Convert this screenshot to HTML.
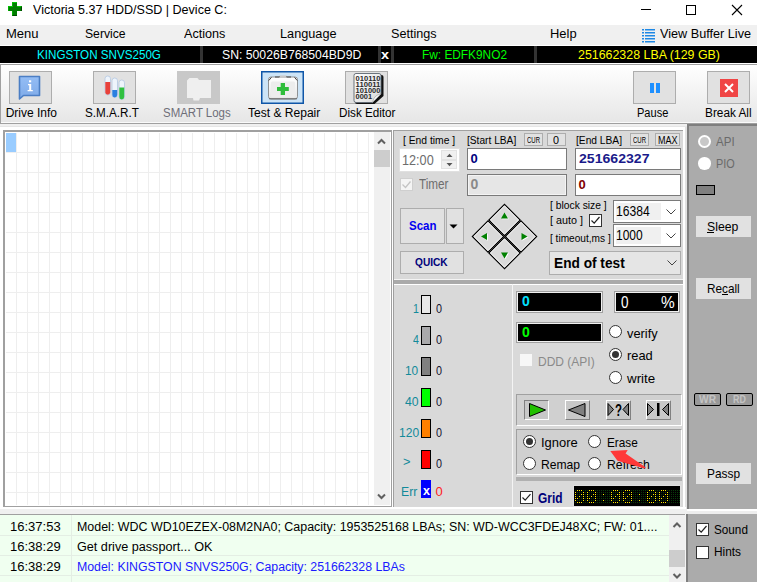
<!DOCTYPE html><html><head><meta charset="utf-8"><style>*{margin:0;padding:0;box-sizing:border-box}
html,body{width:757px;height:582px;overflow:hidden;background:#f0f0f0;position:relative;font-family:"Liberation Sans",sans-serif}
.a{position:absolute}
.t{position:absolute;white-space:pre;line-height:1;transform-origin:0 0}
svg{position:absolute;overflow:visible}
</style></head><body><div class="a" style="left:0px;top:0px;width:757px;height:25px;background:#fff"></div>
<div class="a" style="left:12px;top:2px;width:5px;height:14px;background:#007c00;border-top:1px solid #00c800;border-left:1px solid #00b000;border-bottom:1px solid #004800"></div>
<div class="a" style="left:8px;top:6px;width:14px;height:5px;background:#007c00;border-top:1px solid #00c800;border-left:1px solid #00b000;border-right:1px solid #004800"></div>
<div class="a" style="left:13px;top:6px;width:4px;height:5px;background:#007c00"></div>
<div class="t" style="left:32.50px;top:4.00px;font-size:12px;color:#000;transform:scaleX(1.0446);">Victoria 5.37 HDD/SSD | Device C:</div>
<div class="a" style="left:641px;top:9px;width:10px;height:1px;background:#000"></div>
<div class="a" style="left:686px;top:5px;width:10px;height:10px;border:1px solid #000"></div>
<svg style="left:732px;top:5px" width="10" height="10"><path d="M0 0L10 10M10 0L0 10" stroke="#000" stroke-width="1.1"/></svg>
<div class="a" style="left:0px;top:25px;width:757px;height:20px;background:#f0f0f0"></div>
<div class="t" style="left:6.30px;top:28.00px;font-size:12px;color:#000;transform:scaleX(1.0862);">Menu</div>
<div class="t" style="left:85.40px;top:28.00px;font-size:12px;color:#000;transform:scaleX(1.0145);">Service</div>
<div class="t" style="left:183.90px;top:28.00px;font-size:12px;color:#000;transform:scaleX(1.0522);">Actions</div>
<div class="t" style="left:280.20px;top:28.00px;font-size:12px;color:#000;transform:scaleX(1.0583);">Language</div>
<div class="t" style="left:390.90px;top:28.00px;font-size:12px;color:#000;transform:scaleX(1.0518);">Settings</div>
<div class="t" style="left:550.20px;top:28.00px;font-size:12px;color:#000;transform:scaleX(1.0776);">Help</div>
<svg style="left:642px;top:29px" width="14" height="14"><rect x="0" y="0" width="2" height="1.5" fill="#1e88e5"/><rect x="3" y="0" width="10" height="1.5" fill="#1e88e5"/><rect x="0" y="3" width="2" height="1.5" fill="#1e88e5"/><rect x="3" y="3" width="10" height="1.5" fill="#1e88e5"/><rect x="0" y="6" width="2" height="1.5" fill="#1e88e5"/><rect x="3" y="6" width="10" height="1.5" fill="#1e88e5"/><rect x="0" y="9" width="2" height="1.5" fill="#1e88e5"/><rect x="3" y="9" width="10" height="1.5" fill="#1e88e5"/><rect x="0" y="12" width="2" height="1.5" fill="#1e88e5"/><rect x="3" y="12" width="10" height="1.5" fill="#1e88e5"/></svg>
<div class="t" style="left:660.20px;top:28.00px;font-size:12px;color:#000;transform:scaleX(1.0547);">View Buffer Live</div>
<div class="a" style="left:0px;top:45px;width:757px;height:1px;background:#fff"></div>
<div class="a" style="left:0px;top:46px;width:757px;height:17px;background:#000"></div>
<div class="a" style="left:200px;top:46px;width:3px;height:17px;background:#333"></div>
<div class="a" style="left:378px;top:46px;width:3px;height:17px;background:#333"></div>
<div class="a" style="left:391px;top:46px;width:3px;height:17px;background:#333"></div>
<div class="a" style="left:534px;top:46px;width:3px;height:17px;background:#333"></div>
<div class="t" style="left:37.40px;top:49.00px;font-size:12px;color:#00ffff;transform:scaleX(0.9693);">KINGSTON SNVS250G</div>
<div class="t" style="left:221.50px;top:49.00px;font-size:12px;color:#fff;transform:scaleX(1.0185);">SN: 50026B768504BD9D</div>
<div class="t" style="left:381.40px;top:48.00px;font-size:13px;color:#fff;font-weight:700;transform:scaleX(1.1068);">x</div>
<div class="t" style="left:421.50px;top:49.00px;font-size:12px;color:#00ff00;transform:scaleX(0.9882);">Fw: EDFK9NO2</div>
<div class="t" style="left:577.50px;top:49.00px;font-size:12px;color:#ffff00;transform:scaleX(1.0332);">251662328 LBA (129 GB)</div>
<div class="a" style="left:0px;top:63px;width:757px;height:1px;background:#fff"></div>
<div class="a" style="left:0px;top:64px;width:757px;height:60px;background:linear-gradient(#ffffff,#e6e6e6);border-top:1px solid #a0a0a0;border-bottom:1px solid #a0a0a0"></div>
<div class="a" style="left:0px;top:64px;width:1px;height:59px;background:#a0a0a0"></div>
<div class="a" style="left:9px;top:71px;width:43px;height:33px;background:#e1e1e1;border:1px solid #adadad"></div>
<div class="a" style="left:93px;top:71px;width:43px;height:33px;background:#e1e1e1;border:1px solid #adadad"></div>
<div class="a" style="left:177px;top:71px;width:43px;height:33px;background:#c8c8c8"></div>
<div class="a" style="left:261px;top:71px;width:43px;height:33px;background:#cce4f7;border:1px solid #0f56a8;box-shadow:inset 0 0 0 0.5px #0f56a8"></div>
<div class="a" style="left:345px;top:71px;width:43px;height:33px;background:#e1e1e1;border:1px solid #adadad"></div>
<div class="a" style="left:633px;top:71px;width:43px;height:33px;background:#e1e1e1;border:1px solid #adadad"></div>
<div class="a" style="left:707px;top:71px;width:43px;height:33px;background:#e1e1e1;border:1px solid #adadad"></div>
<svg style="left:0;top:0" width="757" height="582"><defs><linearGradient id="gb" x1="0" y1="0" x2="0" y2="1"><stop offset="0" stop-color="#94bdf5"/><stop offset="1" stop-color="#7eaae8"/></linearGradient><linearGradient id="kit" x1="0" y1="0" x2="0" y2="1"><stop offset="0" stop-color="#ffffff"/><stop offset="1" stop-color="#e6e6e6"/></linearGradient><linearGradient id="doc" x1="0" y1="0" x2="1" y2="1"><stop offset="0" stop-color="#ffffff"/><stop offset="1" stop-color="#d8d8d8"/></linearGradient></defs><path d="M19.5 76.5H39.5V95.5H23.5L19.5 99Z" fill="url(#gb)" stroke="#4b7ec4" stroke-width="1.6" stroke-linejoin="round"/><rect x="29" y="80.3" width="2.2" height="2" fill="#fff"/><path d="M28 84H31.2V90H32.8V91.3H27.6V90H29.2V85.3H28Z" fill="#fff"/><rect x="105" y="76" width="5.5" height="19" rx="2.7" fill="#eef4fb" stroke="#b4c8e2" stroke-width="0.8"/><path d="M105.3 82H110.2V92.3A2.45 2.45 0 0 1 105.3 92.3Z" fill="#e8413a"/><rect x="112" y="78" width="5.5" height="19.5" rx="2.7" fill="#eef4fb" stroke="#b4c8e2" stroke-width="0.8"/><path d="M112.3 90H117.2V95A2.45 2.45 0 0 1 112.3 95Z" fill="#2a7fe0"/><rect x="119" y="80" width="5.5" height="19.5" rx="2.7" fill="#eef4fb" stroke="#b4c8e2" stroke-width="0.8"/><path d="M119.3 87.5H124.2V97A2.45 2.45 0 0 1 119.3 97Z" fill="#30c040"/><path d="M187 80.5L189.5 78H197.5L199 80H211V98H200L199 100.5H193.5L193 98H187Z" fill="#efefef"/><rect x="268.5" y="77" width="29" height="22" rx="2.5" fill="url(#kit)" stroke="#7a7a7a" stroke-width="0.8"/><rect x="271" y="81.5" width="24" height="15.5" rx="1.5" fill="#ededed"/><path d="M268.8 80.5L271.5 77.3M297.2 80.5L294.5 77.3" stroke="#444" stroke-width="1"/><path d="M275 77H279.5V76M286.5 76V77H291" fill="none" stroke="#444" stroke-width="1"/><rect x="279.5" y="75.5" width="7" height="2" fill="#c8c8c8"/><path d="M269 98.8H297" stroke="#666" stroke-width="1"/><rect x="280.7" y="83" width="4.3" height="12" fill="#2fbd3b"/><rect x="277" y="87" width="11.8" height="4" fill="#2fbd3b"/><path d="M357 75H381.5A2 2 0 0 1 383.5 77V96L374.5 104H357A2 2 0 0 1 355 102V77A2 2 0 0 1 357 75Z" fill="#111"/><path d="M356 73.5H379A2 2 0 0 1 381 75.5V94L372.5 102.5H356A2 2 0 0 1 354 100.5V75.5A2 2 0 0 1 356 73.5Z" fill="url(#doc)" stroke="#5d6670" stroke-width="0.9"/><path d="M381 94L372.5 102.5C373.5 98.5 375 95 381 94Z" fill="#f4f4f4" stroke="#8a8a8a" stroke-width="0.5"/><text x="355.6" y="80.8" font-family="Liberation Sans" font-weight="700" font-size="7.4" fill="#2a2a2a" textLength="24.8" lengthAdjust="spacingAndGlyphs">010110</text><text x="355.6" y="87" font-family="Liberation Sans" font-weight="700" font-size="7.4" fill="#2a2a2a" textLength="24.8" lengthAdjust="spacingAndGlyphs">110011</text><text x="355.6" y="93.2" font-family="Liberation Sans" font-weight="700" font-size="7.4" fill="#2a2a2a" textLength="24.8" lengthAdjust="spacingAndGlyphs">101000</text><text x="355.6" y="99.4" font-family="Liberation Sans" font-weight="700" font-size="7.4" fill="#2a2a2a" textLength="16.5" lengthAdjust="spacingAndGlyphs">0001</text></svg>
<div class="t" style="left:5.70px;top:107.00px;font-size:12px;color:#000;">Drive Info</div>
<div class="t" style="left:85.40px;top:107.00px;font-size:12px;color:#000;transform:scaleX(0.9723);">S.M.A.R.T</div>
<div class="t" style="left:163.20px;top:107.00px;font-size:12px;color:#6e6e78;transform:scaleX(0.9546);">SMART Logs</div>
<div class="t" style="left:248.00px;top:107.00px;font-size:12px;color:#000;transform:scaleX(1.0038);">Test & Repair</div>
<div class="t" style="left:339.00px;top:107.00px;font-size:12px;color:#000;transform:scaleX(0.9738);">Disk Editor</div>
<div class="t" style="left:637.20px;top:107.00px;font-size:12px;color:#000;transform:scaleX(0.9200);">Pause</div>
<div class="t" style="left:705.00px;top:107.00px;font-size:12px;color:#000;transform:scaleX(0.9841);">Break All</div>
<div class="a" style="left:650px;top:83px;width:4px;height:10px;background:#1e90ff"></div>
<div class="a" style="left:656px;top:83px;width:4px;height:10px;background:#1e90ff"></div>
<div class="a" style="left:720px;top:79px;width:18px;height:18px;background:#f04545"></div>
<svg style="left:724px;top:83px" width="10" height="10"><path d="M1 1L9 9M9 1L1 9" stroke="#fff" stroke-width="2"/></svg>
<div class="a" style="left:0px;top:124px;width:687px;height:390px;background:#f0f0f0"></div>
<div class="a" style="left:0px;top:127px;width:687px;height:382px;background:#fff"></div>
<div class="a" style="left:0px;top:126px;width:687px;height:1px;background:#e6e6e6"></div>
<div class="a" style="left:1px;top:122px;width:756px;height:1px;background:#fafafa"></div>
<div class="a" style="left:3px;top:130px;width:389px;height:377px;background:#fff;border-left:2px solid #a0a0a0;border-top:2px solid #a0a0a0;border-bottom:1px solid #a0a0a0;border-right:1px solid #a0a0a0"></div>
<svg style="left:0;top:0" width="757" height="582"><rect x="16" y="133" width="1" height="372" fill="#eeeeee"/><rect x="27" y="133" width="1" height="372" fill="#eeeeee"/><rect x="38" y="133" width="1" height="372" fill="#eeeeee"/><rect x="49" y="133" width="1" height="372" fill="#eeeeee"/><rect x="60" y="133" width="1" height="372" fill="#eeeeee"/><rect x="71" y="133" width="1" height="372" fill="#eeeeee"/><rect x="82" y="133" width="1" height="372" fill="#eeeeee"/><rect x="93" y="133" width="1" height="372" fill="#eeeeee"/><rect x="104" y="133" width="1" height="372" fill="#eeeeee"/><rect x="115" y="133" width="1" height="372" fill="#eeeeee"/><rect x="126" y="133" width="1" height="372" fill="#eeeeee"/><rect x="137" y="133" width="1" height="372" fill="#eeeeee"/><rect x="148" y="133" width="1" height="372" fill="#eeeeee"/><rect x="159" y="133" width="1" height="372" fill="#eeeeee"/><rect x="170" y="133" width="1" height="372" fill="#eeeeee"/><rect x="181" y="133" width="1" height="372" fill="#eeeeee"/><rect x="192" y="133" width="1" height="372" fill="#eeeeee"/><rect x="203" y="133" width="1" height="372" fill="#eeeeee"/><rect x="214" y="133" width="1" height="372" fill="#eeeeee"/><rect x="225" y="133" width="1" height="372" fill="#eeeeee"/><rect x="236" y="133" width="1" height="372" fill="#eeeeee"/><rect x="247" y="133" width="1" height="372" fill="#eeeeee"/><rect x="258" y="133" width="1" height="372" fill="#eeeeee"/><rect x="269" y="133" width="1" height="372" fill="#eeeeee"/><rect x="280" y="133" width="1" height="372" fill="#eeeeee"/><rect x="291" y="133" width="1" height="372" fill="#eeeeee"/><rect x="302" y="133" width="1" height="372" fill="#eeeeee"/><rect x="313" y="133" width="1" height="372" fill="#eeeeee"/><rect x="324" y="133" width="1" height="372" fill="#eeeeee"/><rect x="335" y="133" width="1" height="372" fill="#eeeeee"/><rect x="346" y="133" width="1" height="372" fill="#eeeeee"/><rect x="357" y="133" width="1" height="372" fill="#eeeeee"/><rect x="368" y="133" width="1" height="372" fill="#eeeeee"/><rect x="6" y="152" width="363" height="1" fill="#eeeeee"/><rect x="6" y="172" width="363" height="1" fill="#eeeeee"/><rect x="6" y="192" width="363" height="1" fill="#eeeeee"/><rect x="6" y="212" width="363" height="1" fill="#eeeeee"/><rect x="6" y="232" width="363" height="1" fill="#eeeeee"/><rect x="6" y="252" width="363" height="1" fill="#eeeeee"/><rect x="6" y="272" width="363" height="1" fill="#eeeeee"/><rect x="6" y="292" width="363" height="1" fill="#eeeeee"/><rect x="6" y="312" width="363" height="1" fill="#eeeeee"/><rect x="6" y="332" width="363" height="1" fill="#eeeeee"/><rect x="6" y="352" width="363" height="1" fill="#eeeeee"/><rect x="6" y="372" width="363" height="1" fill="#eeeeee"/><rect x="6" y="392" width="363" height="1" fill="#eeeeee"/><rect x="6" y="412" width="363" height="1" fill="#eeeeee"/><rect x="6" y="432" width="363" height="1" fill="#eeeeee"/><rect x="6" y="452" width="363" height="1" fill="#eeeeee"/><rect x="6" y="472" width="363" height="1" fill="#eeeeee"/><rect x="6" y="492" width="363" height="1" fill="#eeeeee"/></svg>
<div class="a" style="left:6px;top:133px;width:10px;height:19px;background:#99ccff"></div>
<div class="a" style="left:374px;top:132px;width:16px;height:373px;background:#f0f0f0"></div>
<div class="a" style="left:374px;top:150px;width:16px;height:17px;background:#cdcdcd"></div>
<svg style="left:374px;top:132px" width="16" height="373"><path d="M4 11.5L7.5 8L11 11.5" fill="none" stroke="#606060" stroke-width="2"/><path d="M4 362.5L7.5 366L11 362.5" fill="none" stroke="#606060" stroke-width="2"/></svg>
<div class="a" style="left:393px;top:130px;width:290px;height:377px;background:#d9d9d9;border-left:1px solid #a0a0a0;border-top:1px solid #a0a0a0"></div>
<div class="a" style="left:683px;top:127px;width:2px;height:380px;background:#fff"></div>
<div class="a" style="left:685px;top:127px;width:2px;height:382px;background:#e2e2e2"></div>
<div class="a" style="left:393px;top:507px;width:293px;height:2px;background:#fff"></div>
<div class="t" style="left:402.50px;top:136.00px;font-size:10px;color:#000;transform:scaleX(1.0320);">[ End time ]</div>
<div class="t" style="left:467.10px;top:136.00px;font-size:10px;color:#000;transform:scaleX(1.0176);">[Start LBA]</div>
<div class="t" style="left:575.50px;top:136.00px;font-size:10px;color:#000;transform:scaleX(1.0215);">[End LBA]</div>
<div class="a" style="left:524px;top:133px;width:19px;height:13px;background:#e1e1e1;border:1px solid #adadad"></div>
<div class="t" style="left:527.00px;top:136.00px;font-size:9px;color:#000;transform:scaleX(0.6666);">CUR</div>
<div class="a" style="left:547px;top:133px;width:19px;height:13px;background:#e1e1e1;border:1px solid #adadad"></div>
<div class="t" style="left:553.00px;top:136.00px;font-size:10px;color:#000;transform:scaleX(1.0791);">0</div>
<div class="a" style="left:630px;top:133px;width:19px;height:13px;background:#e1e1e1;border:1px solid #adadad"></div>
<div class="t" style="left:633.00px;top:136.00px;font-size:9px;color:#000;transform:scaleX(0.6666);">CUR</div>
<div class="a" style="left:655px;top:133px;width:25px;height:13px;background:#e1e1e1;border:1px solid #adadad"></div>
<div class="t" style="left:657.50px;top:136.00px;font-size:10px;color:#000;transform:scaleX(0.8999);">MAX</div>
<div class="a" style="left:399px;top:148px;width:61px;height:24px;background:#fff;border:1px solid #e0e0e0"></div>
<div class="t" style="left:401.90px;top:153.00px;font-size:14px;color:#6d6d6d;transform:scaleX(0.9050);">12:00</div>
<div class="a" style="left:441px;top:150px;width:16px;height:10px;background:#f0f0f0;border:1px solid #e2e2e2"></div>
<div class="a" style="left:441px;top:160px;width:16px;height:9px;background:#f0f0f0;border:1px solid #e2e2e2"></div>
<svg style="left:0;top:0" width="757" height="582"><path d="M446.5 157L449.5 153.8L452.5 157Z" fill="#555"/><path d="M446.5 163L449.5 166.2L452.5 163Z" fill="#555"/></svg>
<div class="a" style="left:467px;top:148px;width:100px;height:22px;background:#fff;border:1px solid #7a7a7a"></div>
<div class="t" style="left:470.50px;top:152.00px;font-size:13px;color:#000080;font-weight:700;">0</div>
<div class="a" style="left:575px;top:148px;width:106px;height:22px;background:#fff;border:1px solid #7a7a7a"></div>
<div class="t" style="left:578.70px;top:152.00px;font-size:13px;color:#1a1a8a;font-weight:700;transform:scaleX(1.0835);">251662327</div>
<div class="a" style="left:467px;top:174px;width:100px;height:22px;background:#e6e6e6;border:1px solid #7a7a7a;box-shadow:inset 0 0 0 1px #f4f4f4"></div>
<div class="t" style="left:470.50px;top:177.00px;font-size:14px;color:#8a8a8a;font-weight:700;">0</div>
<div class="a" style="left:575px;top:174px;width:106px;height:22px;background:#fff;border:1px solid #7a7a7a"></div>
<div class="t" style="left:578.50px;top:178.00px;font-size:13px;color:#800000;font-weight:700;">0</div>
<div class="a" style="left:400px;top:178px;width:13px;height:13px;background:#f4f4f4;border:1px solid #cfcfcf"></div>
<svg style="left:400px;top:178px" width="13" height="13"><path d="M2.5 6.5L5.5 9.5L10.5 3.5" fill="none" stroke="#c4c4c4" stroke-width="1.3"/></svg>
<div class="t" style="left:419.30px;top:177.00px;font-size:14px;color:#6d6d6d;transform:scaleX(0.8368);">Timer</div>
<div class="a" style="left:400px;top:208px;width:45px;height:36px;background:#e1e1e1;border:1px solid #adadad"></div>
<div class="t" style="left:409.00px;top:219.00px;font-size:13px;color:#0000f0;font-weight:700;transform:scaleX(0.8851);">Scan</div>
<div class="a" style="left:446px;top:208px;width:18px;height:36px;background:#e1e1e1;border:1px solid #adadad"></div>
<svg style="left:449px;top:224px" width="10" height="6"><path d="M0.5 0.5L8.5 0.5L4.5 4.5Z" fill="#000"/></svg>
<div class="a" style="left:400px;top:251px;width:64px;height:23px;background:#e1e1e1;border:1px solid #adadad"></div>
<div class="t" style="left:415.40px;top:257.00px;font-size:11px;color:#00007a;font-weight:700;transform:scaleX(0.9226);">QUICK</div>
<svg style="left:0;top:0" width="757" height="582"><polygon points="504.5,204.4 520.1,220.0 504.5,235.6 488.9,220.0" fill="#dadada" stroke="#000" stroke-width="1.25"/><polygon points="504.5,205.9 518.6,220.0 504.5,234.1 490.4,220.0" fill="none" stroke="#f4f4f4" stroke-width="1"/><polygon points="488.0,220.9 503.6,236.5 488.0,252.1 472.4,236.5" fill="#dadada" stroke="#000" stroke-width="1.25"/><polygon points="488.0,222.4 502.1,236.5 488.0,250.6 473.9,236.5" fill="none" stroke="#f4f4f4" stroke-width="1"/><polygon points="521.0,220.9 536.6,236.5 521.0,252.1 505.4,236.5" fill="#dadada" stroke="#000" stroke-width="1.25"/><polygon points="521.0,222.4 535.1,236.5 521.0,250.6 506.9,236.5" fill="none" stroke="#f4f4f4" stroke-width="1"/><polygon points="504.5,237.4 520.1,253.0 504.5,268.6 488.9,253.0" fill="#dadada" stroke="#000" stroke-width="1.25"/><polygon points="504.5,238.9 518.6,253.0 504.5,267.1 490.4,253.0" fill="none" stroke="#f4f4f4" stroke-width="1"/><path d="M504.5 212.5L501 218.5L508 218.5Z" fill="#fff" transform="translate(0.8,0.8)"/><path d="M504.5 258.5L501 252.5L508 252.5Z" fill="#fff" transform="translate(0.8,0.8)"/><path d="M481 236.5L487 233L487 240Z" fill="#fff" transform="translate(0.8,0.8)"/><path d="M527.5 236.5L521.5 233L521.5 240Z" fill="#fff" transform="translate(0.8,0.8)"/><path d="M504.5 212.5L501 218.5L508 218.5Z" fill="#008000"/><path d="M504.5 258.5L501 252.5L508 252.5Z" fill="#008000"/><path d="M481 236.5L487 233L487 240Z" fill="#008000"/><path d="M527.5 236.5L521.5 233L521.5 240Z" fill="#008000"/></svg>
<div class="t" style="left:550.30px;top:200.00px;font-size:11px;color:#000;transform:scaleX(0.9368);">[ block size ]</div>
<div class="t" style="left:550.30px;top:215.00px;font-size:11px;color:#000;transform:scaleX(0.9781);">[ auto ]</div>
<div class="a" style="left:589px;top:214px;width:13px;height:13px;background:#fff;border:1px solid #333"></div>
<svg style="left:589px;top:214px" width="13" height="13"><path d="M2.5 6.5L5.2 9.2L10.5 3" fill="none" stroke="#222" stroke-width="1.2"/></svg>
<div class="t" style="left:550.30px;top:233.00px;font-size:11px;color:#000;transform:scaleX(0.9195);">[ timeout,ms ]</div>
<div class="a" style="left:613px;top:200px;width:68px;height:23px;background:#fff;border:1px solid #7a7a7a"></div>
<div class="a" style="left:616px;top:203px;width:45px;height:17px;background:#f0f0f0"></div>
<div class="t" style="left:616.30px;top:204.00px;font-size:14px;color:#000;transform:scaleX(0.8656);">16384</div>
<svg style="left:666px;top:209px" width="10" height="6"><path d="M0.5 0.5L5 5L9.5 0.5" fill="none" stroke="#444" stroke-width="1"/></svg>
<div class="a" style="left:613px;top:224px;width:68px;height:23px;background:#fff;border:1px solid #7a7a7a"></div>
<div class="a" style="left:616px;top:227px;width:45px;height:17px;background:#f0f0f0"></div>
<div class="t" style="left:616.30px;top:228.00px;font-size:14px;color:#000;transform:scaleX(0.8571);">1000</div>
<svg style="left:666px;top:233px" width="10" height="6"><path d="M0.5 0.5L5 5L9.5 0.5" fill="none" stroke="#444" stroke-width="1"/></svg>
<div class="a" style="left:549px;top:251px;width:132px;height:24px;background:#e5e5e5;border:1px solid #adadad"></div>
<div class="t" style="left:553.50px;top:255.00px;font-size:15px;color:#000;font-weight:700;transform:scaleX(0.9122);">End of test</div>
<svg style="left:667px;top:260px" width="10" height="6"><path d="M0.5 0.5L5 5L9.5 0.5" fill="none" stroke="#444" stroke-width="1"/></svg>
<div class="a" style="left:394px;top:279px;width:289px;height:1px;background:#f4f4f4"></div>
<div class="a" style="left:394px;top:280px;width:289px;height:4px;background:#aaaaaa"></div>
<div class="a" style="left:394px;top:284px;width:289px;height:1px;background:#fff"></div>
<div class="a" style="left:512px;top:284px;width:1px;height:223px;background:#f4f4f4"></div>
<div class="a" style="left:421px;top:295px;width:10px;height:19px;background:#e8e8e8;border:1px solid #000"></div>
<div class="t" style="left:412.70px;top:302.00px;font-size:13px;color:#128a9a;transform:scaleX(0.8163);">1</div>
<div class="t" style="left:435.50px;top:302.00px;font-size:13px;color:#14102e;transform:scaleX(0.8301);">0</div>
<div class="a" style="left:421px;top:326px;width:10px;height:19px;background:#a9a9ab;border:1px solid #000"></div>
<div class="t" style="left:412.70px;top:333.00px;font-size:13px;color:#128a9a;transform:scaleX(0.8163);">4</div>
<div class="t" style="left:435.50px;top:333.00px;font-size:13px;color:#14102e;transform:scaleX(0.8301);">0</div>
<div class="a" style="left:421px;top:357px;width:10px;height:19px;background:#808080;border:1px solid #000"></div>
<div class="t" style="left:405.40px;top:364.00px;font-size:13px;color:#128a9a;transform:scaleX(0.9131);">10</div>
<div class="t" style="left:435.50px;top:364.00px;font-size:13px;color:#14102e;transform:scaleX(0.8301);">0</div>
<div class="a" style="left:421px;top:388px;width:10px;height:19px;background:#00ff00;border:1px solid #000"></div>
<div class="t" style="left:405.00px;top:395.00px;font-size:13px;color:#128a9a;transform:scaleX(0.9408);">40</div>
<div class="t" style="left:435.50px;top:395.00px;font-size:13px;color:#14102e;transform:scaleX(0.8301);">0</div>
<div class="a" style="left:421px;top:419px;width:10px;height:19px;background:#ff8000;border:1px solid #000"></div>
<div class="t" style="left:398.50px;top:426.00px;font-size:13px;color:#128a9a;transform:scaleX(0.9270);">120</div>
<div class="t" style="left:435.50px;top:426.00px;font-size:13px;color:#14102e;transform:scaleX(0.8301);">0</div>
<div class="a" style="left:421px;top:450px;width:10px;height:19px;background:#ff0000;border:1px solid #000"></div>
<div class="t" style="left:403.00px;top:455.00px;font-size:13px;color:#128a9a;transform:scaleX(0.9879);">></div>
<div class="t" style="left:435.50px;top:457.00px;font-size:13px;color:#14102e;transform:scaleX(0.8301);">0</div>
<div class="a" style="left:421px;top:480px;width:10px;height:18px;background:#0000ff"></div>
<div class="t" style="left:422.50px;top:484.00px;font-size:13px;color:#fff;font-weight:700;transform:scaleX(0.9685);">x</div>
<div class="t" style="left:400.50px;top:485.00px;font-size:13px;color:#128a9a;transform:scaleX(0.9406);">Err</div>
<div class="t" style="left:435.50px;top:485.00px;font-size:13px;color:#ff2020;">0</div>
<div class="a" style="left:516px;top:291px;width:87px;height:22px;background:#000;border:1px solid #a0a0a0;box-shadow:inset 0 0 0 1px #f0f0f0"></div>
<div class="t" style="left:522.00px;top:294.00px;font-size:14px;color:#00e0ff;font-weight:700;">0</div>
<div class="a" style="left:614px;top:291px;width:66px;height:22px;background:#000;border:1px solid #a0a0a0;box-shadow:inset 0 0 0 1px #f0f0f0"></div>
<div class="t" style="left:621.00px;top:294.00px;font-size:17px;color:#fff;transform:scaleX(0.7935);">0</div>
<div class="t" style="left:660.70px;top:294.00px;font-size:17px;color:#fff;transform:scaleX(0.9065);">%</div>
<div class="a" style="left:516px;top:322px;width:87px;height:21px;background:#000;border:1px solid #a0a0a0;box-shadow:inset 0 0 0 1px #f0f0f0"></div>
<div class="t" style="left:522.00px;top:325.00px;font-size:14px;color:#00ff00;font-weight:700;">0</div>
<div class="a" style="left:609px;top:325px;width:13px;height:13px;border:1px solid #333;background:#fff;border-radius:50%"></div>
<div class="t" style="left:627.20px;top:327.00px;font-size:13px;color:#000;transform:scaleX(0.9853);">verify</div>
<div class="a" style="left:609px;top:348px;width:13px;height:13px;border:1px solid #333;background:#fff;border-radius:50%"></div>
<div class="a" style="left:612px;top:351px;width:7px;height:7px;background:#333;border-radius:50%"></div>
<div class="t" style="left:627.20px;top:349.00px;font-size:13px;color:#000;transform:scaleX(0.9880);">read</div>
<div class="a" style="left:609px;top:371px;width:13px;height:13px;border:1px solid #333;background:#fff;border-radius:50%"></div>
<div class="t" style="left:627.23px;top:372.00px;font-size:13px;color:#000;transform:scaleX(1.0266);">write</div>
<div class="a" style="left:520px;top:354px;width:12px;height:12px;background:#f7f7f7"></div>
<div class="t" style="left:537.50px;top:355.00px;font-size:13px;color:#8a8a8a;transform:scaleX(0.9237);">DDD (API)</div>
<div class="a" style="left:516px;top:394px;width:166px;height:32px;background:#d0d0d0;border-top:1px solid #a0a0a0;border-left:1px solid #a0a0a0;border-bottom:1px solid #fff;border-right:1px solid #fff"></div>
<div class="a" style="left:524px;top:400px;width:25px;height:20px;background:#c8c8c8;border-top:1px solid #808080;border-left:1px solid #808080;border-bottom:1px solid #fff;border-right:1px solid #fff"></div>
<div class="a" style="left:565px;top:400px;width:25px;height:20px;background:#c8c8c8;border-top:1px solid #fff;border-left:1px solid #fff;border-bottom:1px solid #808080;border-right:1px solid #808080"></div>
<div class="a" style="left:606px;top:400px;width:25px;height:20px;background:#c8c8c8;border-top:1px solid #fff;border-left:1px solid #fff;border-bottom:1px solid #808080;border-right:1px solid #808080"></div>
<div class="a" style="left:646px;top:400px;width:25px;height:20px;background:#c8c8c8;border-top:1px solid #fff;border-left:1px solid #fff;border-bottom:1px solid #808080;border-right:1px solid #808080"></div>
<svg style="left:0;top:0" width="757" height="582"><path d="M529.5 403.5L545.5 410L529.5 416.5Z" fill="#22c000" stroke="#000" stroke-width="1"/><path d="M585 403.5L568.5 410L585 416.5Z" fill="#808080" stroke="#000" stroke-width="1"/><path d="M608 403.5L613.5 409.5L608 415.5Z" fill="#808080" stroke="#000" stroke-width="1"/><path d="M628.5 403.5L623 409.5L628.5 415.5Z" fill="#808080" stroke="#000" stroke-width="1"/><path d="M647.5 403.5L653.5 409.5L647.5 415.5Z" fill="#808080" stroke="#000" stroke-width="1"/><rect x="657" y="403" width="2.5" height="13" fill="#000"/><path d="M668.5 403.5L662.5 409.5L668.5 415.5Z" fill="#808080" stroke="#000" stroke-width="1"/></svg>
<div class="t" style="left:614.80px;top:402.00px;font-size:17px;color:#000;font-weight:700;transform:scaleX(0.6739);">?</div>
<div class="a" style="left:516px;top:429px;width:166px;height:46px;background:#d0d0d0;border-top:1px solid #a0a0a0;border-left:1px solid #a0a0a0;border-bottom:1px solid #fff;border-right:1px solid #fff"></div>
<div class="a" style="left:523px;top:435px;width:13px;height:13px;border:1px solid #333;background:#fff;border-radius:50%"></div>
<div class="a" style="left:526px;top:438px;width:7px;height:7px;background:#333;border-radius:50%"></div>
<div class="t" style="left:541.20px;top:436.00px;font-size:13px;color:#000;transform:scaleX(0.9958);">Ignore</div>
<div class="a" style="left:588px;top:435px;width:13px;height:13px;border:1px solid #333;background:#fff;border-radius:50%"></div>
<div class="t" style="left:606.50px;top:436.00px;font-size:13px;color:#000;transform:scaleX(0.9071);">Erase</div>
<div class="a" style="left:523px;top:457px;width:13px;height:13px;border:1px solid #333;background:#fff;border-radius:50%"></div>
<div class="t" style="left:541.20px;top:458.00px;font-size:13px;color:#000;transform:scaleX(0.9329);">Remap</div>
<div class="a" style="left:588px;top:457px;width:13px;height:13px;border:1px solid #333;background:#fff;border-radius:50%"></div>
<div class="t" style="left:606.50px;top:458.00px;font-size:13px;color:#000;transform:scaleX(0.9404);">Refresh</div>
<svg style="left:0;top:0" width="757" height="582"><path d="M610.3 451.1L627.7 450.1L625.6 453.6L645.8 467.6L644.5 468.6L617.5 460.8Z" fill="#ff3838"/></svg>
<div class="a" style="left:516px;top:477px;width:166px;height:4px;background:#b0b0b0"></div>
<div class="a" style="left:520px;top:491px;width:13px;height:13px;background:#fff;border:1px solid #333"></div>
<svg style="left:520px;top:491px" width="13" height="13"><path d="M2.5 6.5L5.2 9.2L10.5 3.2" fill="none" stroke="#222" stroke-width="1.2"/></svg>
<div class="t" style="left:538.00px;top:491.00px;font-size:14px;color:#00007a;font-weight:700;transform:scaleX(0.8512);">Grid</div>
<div class="a" style="left:573px;top:485px;width:108px;height:22px;background:#000;border:1px solid #e0e0e0"></div>
<svg style="left:0;top:0" width="757" height="582"><rect x="575" y="490" width="1" height="1" fill="#0a3a0a"/><rect x="575" y="492" width="1" height="1" fill="#ffe800"/><rect x="575" y="494" width="1" height="1" fill="#ffe800"/><rect x="575" y="496" width="1" height="1" fill="#ffe800"/><rect x="575" y="498" width="1" height="1" fill="#ffe800"/><rect x="575" y="500" width="1" height="1" fill="#ffe800"/><rect x="575" y="502" width="1" height="1" fill="#0a3a0a"/><rect x="577" y="490" width="1" height="1" fill="#ffe800"/><rect x="577" y="492" width="1" height="1" fill="#0a3a0a"/><rect x="577" y="494" width="1" height="1" fill="#0a3a0a"/><rect x="577" y="496" width="1" height="1" fill="#0a3a0a"/><rect x="577" y="498" width="1" height="1" fill="#ffe800"/><rect x="577" y="500" width="1" height="1" fill="#0a3a0a"/><rect x="577" y="502" width="1" height="1" fill="#ffe800"/><rect x="579" y="490" width="1" height="1" fill="#ffe800"/><rect x="579" y="492" width="1" height="1" fill="#0a3a0a"/><rect x="579" y="494" width="1" height="1" fill="#0a3a0a"/><rect x="579" y="496" width="1" height="1" fill="#ffe800"/><rect x="579" y="498" width="1" height="1" fill="#0a3a0a"/><rect x="579" y="500" width="1" height="1" fill="#0a3a0a"/><rect x="579" y="502" width="1" height="1" fill="#ffe800"/><rect x="581" y="490" width="1" height="1" fill="#ffe800"/><rect x="581" y="492" width="1" height="1" fill="#0a3a0a"/><rect x="581" y="494" width="1" height="1" fill="#ffe800"/><rect x="581" y="496" width="1" height="1" fill="#0a3a0a"/><rect x="581" y="498" width="1" height="1" fill="#0a3a0a"/><rect x="581" y="500" width="1" height="1" fill="#0a3a0a"/><rect x="581" y="502" width="1" height="1" fill="#ffe800"/><rect x="583" y="490" width="1" height="1" fill="#0a3a0a"/><rect x="583" y="492" width="1" height="1" fill="#ffe800"/><rect x="583" y="494" width="1" height="1" fill="#ffe800"/><rect x="583" y="496" width="1" height="1" fill="#ffe800"/><rect x="583" y="498" width="1" height="1" fill="#ffe800"/><rect x="583" y="500" width="1" height="1" fill="#ffe800"/><rect x="583" y="502" width="1" height="1" fill="#0a3a0a"/><rect x="585" y="490" width="1" height="1" fill="#0a3a0a"/><rect x="585" y="492" width="1" height="1" fill="#0a3a0a"/><rect x="585" y="494" width="1" height="1" fill="#0a3a0a"/><rect x="585" y="496" width="1" height="1" fill="#0a3a0a"/><rect x="585" y="498" width="1" height="1" fill="#0a3a0a"/><rect x="585" y="500" width="1" height="1" fill="#0a3a0a"/><rect x="585" y="502" width="1" height="1" fill="#0a3a0a"/><rect x="587" y="490" width="1" height="1" fill="#0a3a0a"/><rect x="587" y="492" width="1" height="1" fill="#ffe800"/><rect x="587" y="494" width="1" height="1" fill="#ffe800"/><rect x="587" y="496" width="1" height="1" fill="#ffe800"/><rect x="587" y="498" width="1" height="1" fill="#ffe800"/><rect x="587" y="500" width="1" height="1" fill="#ffe800"/><rect x="587" y="502" width="1" height="1" fill="#0a3a0a"/><rect x="589" y="490" width="1" height="1" fill="#ffe800"/><rect x="589" y="492" width="1" height="1" fill="#0a3a0a"/><rect x="589" y="494" width="1" height="1" fill="#0a3a0a"/><rect x="589" y="496" width="1" height="1" fill="#0a3a0a"/><rect x="589" y="498" width="1" height="1" fill="#ffe800"/><rect x="589" y="500" width="1" height="1" fill="#0a3a0a"/><rect x="589" y="502" width="1" height="1" fill="#ffe800"/><rect x="591" y="490" width="1" height="1" fill="#ffe800"/><rect x="591" y="492" width="1" height="1" fill="#0a3a0a"/><rect x="591" y="494" width="1" height="1" fill="#0a3a0a"/><rect x="591" y="496" width="1" height="1" fill="#ffe800"/><rect x="591" y="498" width="1" height="1" fill="#0a3a0a"/><rect x="591" y="500" width="1" height="1" fill="#0a3a0a"/><rect x="591" y="502" width="1" height="1" fill="#ffe800"/><rect x="593" y="490" width="1" height="1" fill="#ffe800"/><rect x="593" y="492" width="1" height="1" fill="#0a3a0a"/><rect x="593" y="494" width="1" height="1" fill="#ffe800"/><rect x="593" y="496" width="1" height="1" fill="#0a3a0a"/><rect x="593" y="498" width="1" height="1" fill="#0a3a0a"/><rect x="593" y="500" width="1" height="1" fill="#0a3a0a"/><rect x="593" y="502" width="1" height="1" fill="#ffe800"/><rect x="595" y="490" width="1" height="1" fill="#0a3a0a"/><rect x="595" y="492" width="1" height="1" fill="#ffe800"/><rect x="595" y="494" width="1" height="1" fill="#ffe800"/><rect x="595" y="496" width="1" height="1" fill="#ffe800"/><rect x="595" y="498" width="1" height="1" fill="#ffe800"/><rect x="595" y="500" width="1" height="1" fill="#ffe800"/><rect x="595" y="502" width="1" height="1" fill="#0a3a0a"/><rect x="597" y="490" width="1" height="1" fill="#0a3a0a"/><rect x="597" y="492" width="1" height="1" fill="#0a3a0a"/><rect x="597" y="494" width="1" height="1" fill="#0a3a0a"/><rect x="597" y="496" width="1" height="1" fill="#0a3a0a"/><rect x="597" y="498" width="1" height="1" fill="#0a3a0a"/><rect x="597" y="500" width="1" height="1" fill="#0a3a0a"/><rect x="597" y="502" width="1" height="1" fill="#0a3a0a"/><rect x="599" y="490" width="1" height="1" fill="#0a3a0a"/><rect x="599" y="492" width="1" height="1" fill="#0a3a0a"/><rect x="599" y="494" width="1" height="1" fill="#0a3a0a"/><rect x="599" y="496" width="1" height="1" fill="#0a3a0a"/><rect x="599" y="498" width="1" height="1" fill="#0a3a0a"/><rect x="599" y="500" width="1" height="1" fill="#0a3a0a"/><rect x="599" y="502" width="1" height="1" fill="#0a3a0a"/><rect x="601" y="490" width="1" height="1" fill="#0a3a0a"/><rect x="601" y="492" width="1" height="1" fill="#0a3a0a"/><rect x="601" y="494" width="1" height="1" fill="#0a3a0a"/><rect x="601" y="496" width="1" height="1" fill="#0a3a0a"/><rect x="601" y="498" width="1" height="1" fill="#0a3a0a"/><rect x="601" y="500" width="1" height="1" fill="#0a3a0a"/><rect x="601" y="502" width="1" height="1" fill="#0a3a0a"/><rect x="603" y="490" width="1" height="1" fill="#0a3a0a"/><rect x="603" y="492" width="1" height="1" fill="#0a3a0a"/><rect x="603" y="494" width="1" height="1" fill="#ffe800"/><rect x="603" y="496" width="1" height="1" fill="#0a3a0a"/><rect x="603" y="498" width="1" height="1" fill="#0a3a0a"/><rect x="603" y="500" width="1" height="1" fill="#ffe800"/><rect x="603" y="502" width="1" height="1" fill="#0a3a0a"/><rect x="605" y="490" width="1" height="1" fill="#0a3a0a"/><rect x="605" y="492" width="1" height="1" fill="#0a3a0a"/><rect x="605" y="494" width="1" height="1" fill="#0a3a0a"/><rect x="605" y="496" width="1" height="1" fill="#0a3a0a"/><rect x="605" y="498" width="1" height="1" fill="#0a3a0a"/><rect x="605" y="500" width="1" height="1" fill="#0a3a0a"/><rect x="605" y="502" width="1" height="1" fill="#0a3a0a"/><rect x="607" y="490" width="1" height="1" fill="#0a3a0a"/><rect x="607" y="492" width="1" height="1" fill="#0a3a0a"/><rect x="607" y="494" width="1" height="1" fill="#0a3a0a"/><rect x="607" y="496" width="1" height="1" fill="#0a3a0a"/><rect x="607" y="498" width="1" height="1" fill="#0a3a0a"/><rect x="607" y="500" width="1" height="1" fill="#0a3a0a"/><rect x="607" y="502" width="1" height="1" fill="#0a3a0a"/><rect x="609" y="490" width="1" height="1" fill="#0a3a0a"/><rect x="609" y="492" width="1" height="1" fill="#0a3a0a"/><rect x="609" y="494" width="1" height="1" fill="#0a3a0a"/><rect x="609" y="496" width="1" height="1" fill="#0a3a0a"/><rect x="609" y="498" width="1" height="1" fill="#0a3a0a"/><rect x="609" y="500" width="1" height="1" fill="#0a3a0a"/><rect x="609" y="502" width="1" height="1" fill="#0a3a0a"/><rect x="611" y="490" width="1" height="1" fill="#0a3a0a"/><rect x="611" y="492" width="1" height="1" fill="#ffe800"/><rect x="611" y="494" width="1" height="1" fill="#ffe800"/><rect x="611" y="496" width="1" height="1" fill="#ffe800"/><rect x="611" y="498" width="1" height="1" fill="#ffe800"/><rect x="611" y="500" width="1" height="1" fill="#ffe800"/><rect x="611" y="502" width="1" height="1" fill="#0a3a0a"/><rect x="613" y="490" width="1" height="1" fill="#ffe800"/><rect x="613" y="492" width="1" height="1" fill="#0a3a0a"/><rect x="613" y="494" width="1" height="1" fill="#0a3a0a"/><rect x="613" y="496" width="1" height="1" fill="#0a3a0a"/><rect x="613" y="498" width="1" height="1" fill="#ffe800"/><rect x="613" y="500" width="1" height="1" fill="#0a3a0a"/><rect x="613" y="502" width="1" height="1" fill="#ffe800"/><rect x="615" y="490" width="1" height="1" fill="#ffe800"/><rect x="615" y="492" width="1" height="1" fill="#0a3a0a"/><rect x="615" y="494" width="1" height="1" fill="#0a3a0a"/><rect x="615" y="496" width="1" height="1" fill="#ffe800"/><rect x="615" y="498" width="1" height="1" fill="#0a3a0a"/><rect x="615" y="500" width="1" height="1" fill="#0a3a0a"/><rect x="615" y="502" width="1" height="1" fill="#ffe800"/><rect x="617" y="490" width="1" height="1" fill="#ffe800"/><rect x="617" y="492" width="1" height="1" fill="#0a3a0a"/><rect x="617" y="494" width="1" height="1" fill="#ffe800"/><rect x="617" y="496" width="1" height="1" fill="#0a3a0a"/><rect x="617" y="498" width="1" height="1" fill="#0a3a0a"/><rect x="617" y="500" width="1" height="1" fill="#0a3a0a"/><rect x="617" y="502" width="1" height="1" fill="#ffe800"/><rect x="619" y="490" width="1" height="1" fill="#0a3a0a"/><rect x="619" y="492" width="1" height="1" fill="#ffe800"/><rect x="619" y="494" width="1" height="1" fill="#ffe800"/><rect x="619" y="496" width="1" height="1" fill="#ffe800"/><rect x="619" y="498" width="1" height="1" fill="#ffe800"/><rect x="619" y="500" width="1" height="1" fill="#ffe800"/><rect x="619" y="502" width="1" height="1" fill="#0a3a0a"/><rect x="621" y="490" width="1" height="1" fill="#0a3a0a"/><rect x="621" y="492" width="1" height="1" fill="#0a3a0a"/><rect x="621" y="494" width="1" height="1" fill="#0a3a0a"/><rect x="621" y="496" width="1" height="1" fill="#0a3a0a"/><rect x="621" y="498" width="1" height="1" fill="#0a3a0a"/><rect x="621" y="500" width="1" height="1" fill="#0a3a0a"/><rect x="621" y="502" width="1" height="1" fill="#0a3a0a"/><rect x="623" y="490" width="1" height="1" fill="#0a3a0a"/><rect x="623" y="492" width="1" height="1" fill="#ffe800"/><rect x="623" y="494" width="1" height="1" fill="#ffe800"/><rect x="623" y="496" width="1" height="1" fill="#ffe800"/><rect x="623" y="498" width="1" height="1" fill="#ffe800"/><rect x="623" y="500" width="1" height="1" fill="#ffe800"/><rect x="623" y="502" width="1" height="1" fill="#0a3a0a"/><rect x="625" y="490" width="1" height="1" fill="#ffe800"/><rect x="625" y="492" width="1" height="1" fill="#0a3a0a"/><rect x="625" y="494" width="1" height="1" fill="#0a3a0a"/><rect x="625" y="496" width="1" height="1" fill="#0a3a0a"/><rect x="625" y="498" width="1" height="1" fill="#ffe800"/><rect x="625" y="500" width="1" height="1" fill="#0a3a0a"/><rect x="625" y="502" width="1" height="1" fill="#ffe800"/><rect x="627" y="490" width="1" height="1" fill="#ffe800"/><rect x="627" y="492" width="1" height="1" fill="#0a3a0a"/><rect x="627" y="494" width="1" height="1" fill="#0a3a0a"/><rect x="627" y="496" width="1" height="1" fill="#ffe800"/><rect x="627" y="498" width="1" height="1" fill="#0a3a0a"/><rect x="627" y="500" width="1" height="1" fill="#0a3a0a"/><rect x="627" y="502" width="1" height="1" fill="#ffe800"/><rect x="629" y="490" width="1" height="1" fill="#ffe800"/><rect x="629" y="492" width="1" height="1" fill="#0a3a0a"/><rect x="629" y="494" width="1" height="1" fill="#ffe800"/><rect x="629" y="496" width="1" height="1" fill="#0a3a0a"/><rect x="629" y="498" width="1" height="1" fill="#0a3a0a"/><rect x="629" y="500" width="1" height="1" fill="#0a3a0a"/><rect x="629" y="502" width="1" height="1" fill="#ffe800"/><rect x="631" y="490" width="1" height="1" fill="#0a3a0a"/><rect x="631" y="492" width="1" height="1" fill="#ffe800"/><rect x="631" y="494" width="1" height="1" fill="#ffe800"/><rect x="631" y="496" width="1" height="1" fill="#ffe800"/><rect x="631" y="498" width="1" height="1" fill="#ffe800"/><rect x="631" y="500" width="1" height="1" fill="#ffe800"/><rect x="631" y="502" width="1" height="1" fill="#0a3a0a"/><rect x="633" y="490" width="1" height="1" fill="#0a3a0a"/><rect x="633" y="492" width="1" height="1" fill="#0a3a0a"/><rect x="633" y="494" width="1" height="1" fill="#0a3a0a"/><rect x="633" y="496" width="1" height="1" fill="#0a3a0a"/><rect x="633" y="498" width="1" height="1" fill="#0a3a0a"/><rect x="633" y="500" width="1" height="1" fill="#0a3a0a"/><rect x="633" y="502" width="1" height="1" fill="#0a3a0a"/><rect x="635" y="490" width="1" height="1" fill="#0a3a0a"/><rect x="635" y="492" width="1" height="1" fill="#0a3a0a"/><rect x="635" y="494" width="1" height="1" fill="#0a3a0a"/><rect x="635" y="496" width="1" height="1" fill="#0a3a0a"/><rect x="635" y="498" width="1" height="1" fill="#0a3a0a"/><rect x="635" y="500" width="1" height="1" fill="#0a3a0a"/><rect x="635" y="502" width="1" height="1" fill="#0a3a0a"/><rect x="637" y="490" width="1" height="1" fill="#0a3a0a"/><rect x="637" y="492" width="1" height="1" fill="#0a3a0a"/><rect x="637" y="494" width="1" height="1" fill="#0a3a0a"/><rect x="637" y="496" width="1" height="1" fill="#0a3a0a"/><rect x="637" y="498" width="1" height="1" fill="#0a3a0a"/><rect x="637" y="500" width="1" height="1" fill="#0a3a0a"/><rect x="637" y="502" width="1" height="1" fill="#0a3a0a"/><rect x="639" y="490" width="1" height="1" fill="#0a3a0a"/><rect x="639" y="492" width="1" height="1" fill="#0a3a0a"/><rect x="639" y="494" width="1" height="1" fill="#ffe800"/><rect x="639" y="496" width="1" height="1" fill="#0a3a0a"/><rect x="639" y="498" width="1" height="1" fill="#0a3a0a"/><rect x="639" y="500" width="1" height="1" fill="#ffe800"/><rect x="639" y="502" width="1" height="1" fill="#0a3a0a"/><rect x="641" y="490" width="1" height="1" fill="#0a3a0a"/><rect x="641" y="492" width="1" height="1" fill="#0a3a0a"/><rect x="641" y="494" width="1" height="1" fill="#0a3a0a"/><rect x="641" y="496" width="1" height="1" fill="#0a3a0a"/><rect x="641" y="498" width="1" height="1" fill="#0a3a0a"/><rect x="641" y="500" width="1" height="1" fill="#0a3a0a"/><rect x="641" y="502" width="1" height="1" fill="#0a3a0a"/><rect x="643" y="490" width="1" height="1" fill="#0a3a0a"/><rect x="643" y="492" width="1" height="1" fill="#0a3a0a"/><rect x="643" y="494" width="1" height="1" fill="#0a3a0a"/><rect x="643" y="496" width="1" height="1" fill="#0a3a0a"/><rect x="643" y="498" width="1" height="1" fill="#0a3a0a"/><rect x="643" y="500" width="1" height="1" fill="#0a3a0a"/><rect x="643" y="502" width="1" height="1" fill="#0a3a0a"/><rect x="645" y="490" width="1" height="1" fill="#0a3a0a"/><rect x="645" y="492" width="1" height="1" fill="#0a3a0a"/><rect x="645" y="494" width="1" height="1" fill="#0a3a0a"/><rect x="645" y="496" width="1" height="1" fill="#0a3a0a"/><rect x="645" y="498" width="1" height="1" fill="#0a3a0a"/><rect x="645" y="500" width="1" height="1" fill="#0a3a0a"/><rect x="645" y="502" width="1" height="1" fill="#0a3a0a"/><rect x="647" y="490" width="1" height="1" fill="#0a3a0a"/><rect x="647" y="492" width="1" height="1" fill="#ffe800"/><rect x="647" y="494" width="1" height="1" fill="#ffe800"/><rect x="647" y="496" width="1" height="1" fill="#ffe800"/><rect x="647" y="498" width="1" height="1" fill="#ffe800"/><rect x="647" y="500" width="1" height="1" fill="#ffe800"/><rect x="647" y="502" width="1" height="1" fill="#0a3a0a"/><rect x="649" y="490" width="1" height="1" fill="#ffe800"/><rect x="649" y="492" width="1" height="1" fill="#0a3a0a"/><rect x="649" y="494" width="1" height="1" fill="#0a3a0a"/><rect x="649" y="496" width="1" height="1" fill="#0a3a0a"/><rect x="649" y="498" width="1" height="1" fill="#ffe800"/><rect x="649" y="500" width="1" height="1" fill="#0a3a0a"/><rect x="649" y="502" width="1" height="1" fill="#ffe800"/><rect x="651" y="490" width="1" height="1" fill="#ffe800"/><rect x="651" y="492" width="1" height="1" fill="#0a3a0a"/><rect x="651" y="494" width="1" height="1" fill="#0a3a0a"/><rect x="651" y="496" width="1" height="1" fill="#ffe800"/><rect x="651" y="498" width="1" height="1" fill="#0a3a0a"/><rect x="651" y="500" width="1" height="1" fill="#0a3a0a"/><rect x="651" y="502" width="1" height="1" fill="#ffe800"/><rect x="653" y="490" width="1" height="1" fill="#ffe800"/><rect x="653" y="492" width="1" height="1" fill="#0a3a0a"/><rect x="653" y="494" width="1" height="1" fill="#ffe800"/><rect x="653" y="496" width="1" height="1" fill="#0a3a0a"/><rect x="653" y="498" width="1" height="1" fill="#0a3a0a"/><rect x="653" y="500" width="1" height="1" fill="#0a3a0a"/><rect x="653" y="502" width="1" height="1" fill="#ffe800"/><rect x="655" y="490" width="1" height="1" fill="#0a3a0a"/><rect x="655" y="492" width="1" height="1" fill="#ffe800"/><rect x="655" y="494" width="1" height="1" fill="#ffe800"/><rect x="655" y="496" width="1" height="1" fill="#ffe800"/><rect x="655" y="498" width="1" height="1" fill="#ffe800"/><rect x="655" y="500" width="1" height="1" fill="#ffe800"/><rect x="655" y="502" width="1" height="1" fill="#0a3a0a"/><rect x="657" y="490" width="1" height="1" fill="#0a3a0a"/><rect x="657" y="492" width="1" height="1" fill="#0a3a0a"/><rect x="657" y="494" width="1" height="1" fill="#0a3a0a"/><rect x="657" y="496" width="1" height="1" fill="#0a3a0a"/><rect x="657" y="498" width="1" height="1" fill="#0a3a0a"/><rect x="657" y="500" width="1" height="1" fill="#0a3a0a"/><rect x="657" y="502" width="1" height="1" fill="#0a3a0a"/><rect x="659" y="490" width="1" height="1" fill="#0a3a0a"/><rect x="659" y="492" width="1" height="1" fill="#ffe800"/><rect x="659" y="494" width="1" height="1" fill="#ffe800"/><rect x="659" y="496" width="1" height="1" fill="#ffe800"/><rect x="659" y="498" width="1" height="1" fill="#ffe800"/><rect x="659" y="500" width="1" height="1" fill="#ffe800"/><rect x="659" y="502" width="1" height="1" fill="#0a3a0a"/><rect x="661" y="490" width="1" height="1" fill="#ffe800"/><rect x="661" y="492" width="1" height="1" fill="#0a3a0a"/><rect x="661" y="494" width="1" height="1" fill="#0a3a0a"/><rect x="661" y="496" width="1" height="1" fill="#0a3a0a"/><rect x="661" y="498" width="1" height="1" fill="#ffe800"/><rect x="661" y="500" width="1" height="1" fill="#0a3a0a"/><rect x="661" y="502" width="1" height="1" fill="#ffe800"/><rect x="663" y="490" width="1" height="1" fill="#ffe800"/><rect x="663" y="492" width="1" height="1" fill="#0a3a0a"/><rect x="663" y="494" width="1" height="1" fill="#0a3a0a"/><rect x="663" y="496" width="1" height="1" fill="#ffe800"/><rect x="663" y="498" width="1" height="1" fill="#0a3a0a"/><rect x="663" y="500" width="1" height="1" fill="#0a3a0a"/><rect x="663" y="502" width="1" height="1" fill="#ffe800"/><rect x="665" y="490" width="1" height="1" fill="#ffe800"/><rect x="665" y="492" width="1" height="1" fill="#0a3a0a"/><rect x="665" y="494" width="1" height="1" fill="#ffe800"/><rect x="665" y="496" width="1" height="1" fill="#0a3a0a"/><rect x="665" y="498" width="1" height="1" fill="#0a3a0a"/><rect x="665" y="500" width="1" height="1" fill="#0a3a0a"/><rect x="665" y="502" width="1" height="1" fill="#ffe800"/><rect x="667" y="490" width="1" height="1" fill="#0a3a0a"/><rect x="667" y="492" width="1" height="1" fill="#ffe800"/><rect x="667" y="494" width="1" height="1" fill="#ffe800"/><rect x="667" y="496" width="1" height="1" fill="#ffe800"/><rect x="667" y="498" width="1" height="1" fill="#ffe800"/><rect x="667" y="500" width="1" height="1" fill="#ffe800"/><rect x="667" y="502" width="1" height="1" fill="#0a3a0a"/><rect x="669" y="490" width="1" height="1" fill="#0a3a0a"/><rect x="669" y="492" width="1" height="1" fill="#0a3a0a"/><rect x="669" y="494" width="1" height="1" fill="#0a3a0a"/><rect x="669" y="496" width="1" height="1" fill="#0a3a0a"/><rect x="669" y="498" width="1" height="1" fill="#0a3a0a"/><rect x="669" y="500" width="1" height="1" fill="#0a3a0a"/><rect x="669" y="502" width="1" height="1" fill="#0a3a0a"/><rect x="671" y="490" width="1" height="1" fill="#0a3a0a"/><rect x="671" y="492" width="1" height="1" fill="#0a3a0a"/><rect x="671" y="494" width="1" height="1" fill="#0a3a0a"/><rect x="671" y="496" width="1" height="1" fill="#0a3a0a"/><rect x="671" y="498" width="1" height="1" fill="#0a3a0a"/><rect x="671" y="500" width="1" height="1" fill="#0a3a0a"/><rect x="671" y="502" width="1" height="1" fill="#0a3a0a"/><rect x="673" y="490" width="1" height="1" fill="#0a3a0a"/><rect x="673" y="492" width="1" height="1" fill="#0a3a0a"/><rect x="673" y="494" width="1" height="1" fill="#0a3a0a"/><rect x="673" y="496" width="1" height="1" fill="#0a3a0a"/><rect x="673" y="498" width="1" height="1" fill="#0a3a0a"/><rect x="673" y="500" width="1" height="1" fill="#0a3a0a"/><rect x="673" y="502" width="1" height="1" fill="#0a3a0a"/><rect x="675" y="490" width="1" height="1" fill="#0a3a0a"/><rect x="675" y="492" width="1" height="1" fill="#0a3a0a"/><rect x="675" y="494" width="1" height="1" fill="#0a3a0a"/><rect x="675" y="496" width="1" height="1" fill="#0a3a0a"/><rect x="675" y="498" width="1" height="1" fill="#0a3a0a"/><rect x="675" y="500" width="1" height="1" fill="#0a3a0a"/><rect x="675" y="502" width="1" height="1" fill="#0a3a0a"/><rect x="677" y="490" width="1" height="1" fill="#0a3a0a"/><rect x="677" y="492" width="1" height="1" fill="#0a3a0a"/><rect x="677" y="494" width="1" height="1" fill="#0a3a0a"/><rect x="677" y="496" width="1" height="1" fill="#0a3a0a"/><rect x="677" y="498" width="1" height="1" fill="#0a3a0a"/><rect x="677" y="500" width="1" height="1" fill="#0a3a0a"/><rect x="677" y="502" width="1" height="1" fill="#0a3a0a"/><rect x="679" y="490" width="1" height="1" fill="#0a3a0a"/><rect x="679" y="492" width="1" height="1" fill="#0a3a0a"/><rect x="679" y="494" width="1" height="1" fill="#0a3a0a"/><rect x="679" y="496" width="1" height="1" fill="#0a3a0a"/><rect x="679" y="498" width="1" height="1" fill="#0a3a0a"/><rect x="679" y="500" width="1" height="1" fill="#0a3a0a"/><rect x="679" y="502" width="1" height="1" fill="#0a3a0a"/></svg>
<div class="a" style="left:687px;top:124px;width:70px;height:385px;background:#ababab;border-left:2px solid #7f7f7f;border-top:2px solid #7f7f7f"></div>
<div class="a" style="left:698px;top:135px;width:13px;height:13px;background:#c8c8c8;border:2px solid #fff;border-radius:50%"></div>
<div class="t" style="left:716.30px;top:135.00px;font-size:13px;color:#6a6a6a;transform:scaleX(0.8876);">API</div>
<div class="a" style="left:698px;top:157px;width:12.5px;height:12.5px;background:#fff;border-radius:50%"></div>
<div class="t" style="left:716.30px;top:157.00px;font-size:13px;color:#6a6a6a;transform:scaleX(0.8349);">PIO</div>
<div class="a" style="left:696px;top:185px;width:19px;height:10px;background:#808080;border:1px solid #000"></div>
<div class="a" style="left:696px;top:216px;width:55px;height:21px;background:#e1e1e1"></div>
<div class="t" style="left:707.10px;top:220.00px;font-size:13px;color:#000;transform:scaleX(0.9412);">Sleep</div>
<div class="a" style="left:707px;top:232px;width:7px;height:1px;background:#000"></div>
<div class="a" style="left:696px;top:278px;width:55px;height:21px;background:#e1e1e1"></div>
<div class="t" style="left:706.60px;top:282.00px;font-size:13px;color:#000;transform:scaleX(0.9051);">Recall</div>
<div class="a" style="left:722px;top:294px;width:6px;height:1px;background:#000"></div>
<div class="a" style="left:694px;top:393px;width:27px;height:13px;background:#999;border:1.5px solid #000;border-radius:2px"></div>
<div class="a" style="left:726px;top:393px;width:27px;height:13px;background:#999;border:1.5px solid #000;border-radius:2px"></div>
<div class="t" style="left:698.50px;top:395.00px;font-size:10px;color:#c4c4c4;font-weight:700;transform:scaleX(1.0204);">WR</div>
<div class="t" style="left:732.60px;top:395.00px;font-size:10px;color:#c4c4c4;font-weight:700;transform:scaleX(0.8864);">RD</div>
<div class="a" style="left:696px;top:463px;width:55px;height:21px;background:#e1e1e1"></div>
<div class="t" style="left:707.00px;top:467.00px;font-size:13px;color:#000;transform:scaleX(0.9134);">Passp</div>
<div class="a" style="left:687px;top:509px;width:70px;height:5px;background:#eeeeee"></div>
<div class="a" style="left:687px;top:509px;width:70px;height:2px;background:#fff"></div>
<div class="a" style="left:0px;top:509px;width:687px;height:5px;background:#f0f0f0"></div>
<div class="a" style="left:0px;top:514px;width:687px;height:1px;background:#a0a0a0"></div>
<div class="a" style="left:0px;top:515px;width:669px;height:67px;background:#f0fff0"></div>
<div class="a" style="left:0px;top:535px;width:669px;height:1px;background:#e4eee4"></div>
<div class="a" style="left:0px;top:555px;width:669px;height:1px;background:#e4eee4"></div>
<div class="a" style="left:0px;top:575px;width:669px;height:1px;background:#e4eee4"></div>
<div class="a" style="left:71px;top:515px;width:1px;height:67px;background:#e4eee4"></div>
<div class="a" style="left:669px;top:515px;width:16px;height:67px;background:#f0f0f0"></div>
<div class="a" style="left:669px;top:550px;width:16px;height:17px;background:#cdcdcd"></div>
<svg style="left:669px;top:515px" width="16" height="67"><path d="M4.5 12L8 8.5L11.5 12" fill="none" stroke="#606060" stroke-width="2"/><path d="M4.5 59L8 62.5L11.5 59" fill="none" stroke="#606060" stroke-width="2"/></svg>
<div class="a" style="left:685px;top:514px;width:1px;height:68px;background:#f4f4f4"></div>
<div class="t" style="left:9.50px;top:521.00px;font-size:12px;color:#000;transform:scaleX(1.0853);">16:37:53</div>
<div class="t" style="left:9.50px;top:541.00px;font-size:12px;color:#000;transform:scaleX(1.0853);">16:38:29</div>
<div class="t" style="left:9.50px;top:561.00px;font-size:12px;color:#000;transform:scaleX(1.0853);">16:38:29</div>
<div class="t" style="left:77.30px;top:521.00px;font-size:12px;color:#000;transform:scaleX(1.0365);">Model: WDC WD10EZEX-08M2NA0; Capacity: 1953525168 LBAs; SN: WD-WCC3FDEJ48XC; FW: 01....</div>
<div class="t" style="left:77.30px;top:541.00px;font-size:12px;color:#000;transform:scaleX(1.0526);">Get drive passport... OK</div>
<div class="t" style="left:77.30px;top:561.00px;font-size:12px;color:#1a1aff;transform:scaleX(1.0270);">Model: KINGSTON SNVS250G; Capacity: 251662328 LBAs</div>
<div class="a" style="left:686px;top:514px;width:71px;height:68px;background:#ababab;border-left:2px solid #7f7f7f"></div>
<div class="a" style="left:696px;top:523px;width:13px;height:13px;background:#fff;border:1px solid #333"></div>
<svg style="left:696px;top:523px" width="13" height="13"><path d="M2.5 6.5L5.2 9.2L10.5 3" fill="none" stroke="#222" stroke-width="1.2"/></svg>
<div class="t" style="left:714.00px;top:523.00px;font-size:13px;color:#000;transform:scaleX(0.9017);">Sound</div>
<div class="a" style="left:696px;top:546px;width:13px;height:13px;background:#fff;border:1px solid #333"></div>
<div class="t" style="left:714.00px;top:545.00px;font-size:13px;color:#000;transform:scaleX(0.9117);">Hints</div></body></html>
